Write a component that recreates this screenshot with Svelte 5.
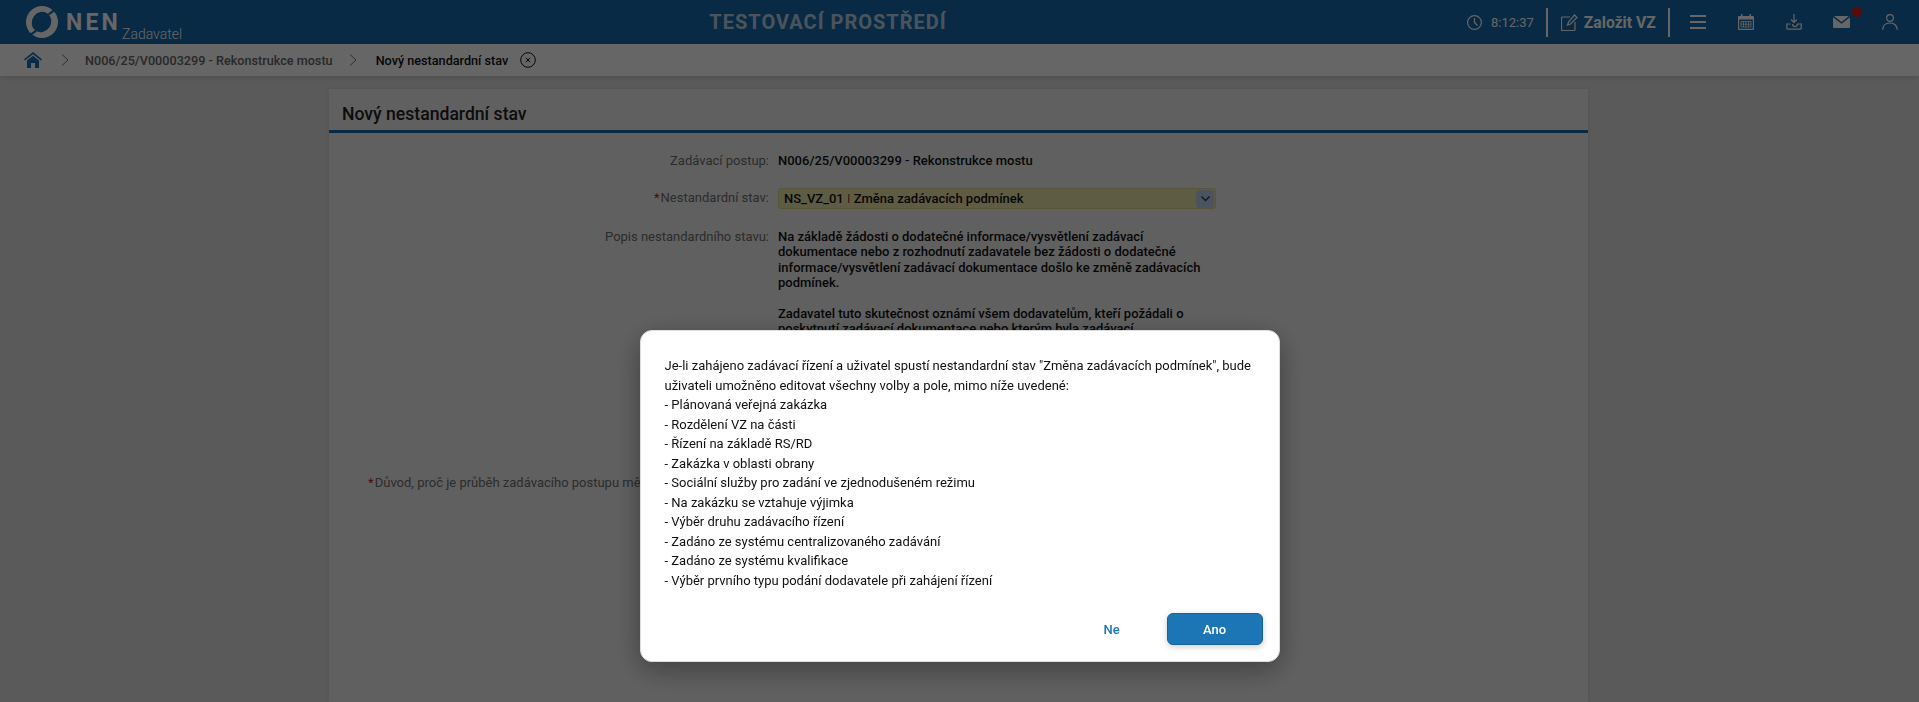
<script>
  const rows = [
    'Je-li zahájeno zadávací řízení a uživatel spustí nestandardní stav "Změna zadávacích podmínek", bude uživateli umožněno editovat všechny volby a pole, mimo níže uvedené:',
    '- Plánovaná veřejná zakázka',
    '- Rozdělení VZ na části',
    '- Řízení na základě RS/RD',
    '- Zakázka v oblasti obrany',
    '- Sociální služby pro zadání ve zjednodušeném režimu',
    '- Na zakázku se vztahuje výjimka',
    '- Výběr druhu zadávacího řízení',
    '- Zadáno ze systému centralizovaného zadávání',
    '- Zadáno ze systému kvalifikace',
    '- Výběr prvního typu podání dodavatele při zahájení řízení'
  ];
</script>

<div class="page">
  <header class="top">
    <div class="brand">
      <svg class="logo" viewBox="0 0 32 32" width="32" height="32">
        <circle cx="16" cy="16" r="16" fill="#fff"/>
        <ellipse cx="15.500" cy="16" rx="9.500" ry="10.500" transform="rotate(35 15.500 16)" fill="#146aac"/>
        <path d="M32 2.500C28 4 25.500 6 22.500 8.500M0 29.500C4 29 7.500 27.500 10 24.500" fill="none" stroke="#146aac" stroke-width="2.200"/>
      </svg>
      <span class="nen">NEN</span>
      <span class="role">Zadavatel</span>
    </div>
    <div class="env">TESTOVACÍ PROSTŘEDÍ</div>
    <div class="tools">
      <svg class="clock" viewBox="0 0 15 15" width="15" height="15" fill="none" stroke="#fff" stroke-width="1.200"><circle cx="7.500" cy="7.500" r="6.900"/><path d="M7.500 3v4.500l3 3"/></svg>
      <span class="time">8:12:37</span>
      <span class="sep"></span>
      <svg class="edit" viewBox="0 0 17 17" width="17" height="17" fill="none" stroke="#fff" stroke-width="1.200"><path d="M9 3H1.500a1 1 0 0 0-1 1v11.500a1 1 0 0 0 1 1H13a1 1 0 0 0 1-1V8M6.500 11l1-3L13.500 1l2.500 2.500L9.500 10z"/></svg>
      <span class="create">Založit VZ</span>
      <span class="sep last"></span>
      <svg class="ic" viewBox="0 0 16 14" width="16" height="14" fill="none" stroke="#fff" stroke-width="1.800"><path d="M0 1h16M0 7h16M0 13h16"/></svg>
      <svg class="ic" viewBox="0 0 16 16" width="16" height="16"><path d="M3 0h1.500v2h7V0H13v2h2a1 1 0 0 1 1 1v12a1 1 0 0 1-1 1H1a1 1 0 0 1-1-1V3a1 1 0 0 1 1-1h2zM1.200 5.500v9.300h13.600V5.500z" fill="#fff" fill-rule="evenodd"/><path d="M3 7.500h10v5.500H3zM5.500 7.500V13M8 7.500V13M10.500 7.500V13M3 10.200h10" stroke="#fff" stroke-width=".8" fill="none"/></svg>
      <svg class="ic" viewBox="0 0 16 16" width="16" height="16" fill="none" stroke="#fff" stroke-width="1.200"><path d="M8 0v8M5 5.500 8 8.500l3-3M4.500 10H.8v4.200a1 1 0 0 0 1 1h12.400a1 1 0 0 0 1-1V10h-3.700a2.500 2.500 0 0 1-5 0"/></svg>
      <span class="mail">
        <svg viewBox="0 0 17 12" width="17" height="12"><path d="M1 0h15l-7.500 6zM0 1.200l8.500 6.600 8.500-6.600V11a1 1 0 0 1-1 1H1a1 1 0 0 1-1-1z" fill="#fff"/></svg>
        <i class="dot"></i>
      </span>
      <svg class="ic" viewBox="0 0 16 16" width="16" height="16" fill="none" stroke="#fff" stroke-width="1.200"><circle cx="8" cy="4" r="3.400"/><path d="M.8 16c0-4 2.500-7 7.200-7s7.200 3 7.200 7"/></svg>
    </div>
  </header>

  <nav class="crumbs">
    <svg class="home" viewBox="0 0 18 16" width="18" height="16"><path d="M9 0l9 7.300-1 1.200L9 2.200 1 8.500 0 7.300z" fill="#1a6fae"/><path d="M9 3.700l6 4.800V16h-4v-5H7v5H3V8.500z" fill="#1a6fae"/></svg>
    <svg class="chev" viewBox="0 0 8 12" width="8" height="12" fill="none" stroke="#777" stroke-width="1"><path d="M1 .5 7 6 1 11.500"/></svg>
    <span class="crumb">N006/25/V00003299 - Rekonstrukce mostu</span>
    <svg class="chev" viewBox="0 0 8 12" width="8" height="12" fill="none" stroke="#777" stroke-width="1"><path d="M1 .5 7 6 1 11.500"/></svg>
    <span class="crumb cur">Nový nestandardní stav</span>
    <svg class="close" viewBox="0 0 16 16" width="16" height="16" fill="none" stroke="#111" stroke-width="1"><circle cx="8" cy="8" r="7.300"/><path d="M5.800 5.800l4.400 4.400M10.200 5.800l-4.400 4.400"/></svg>
  </nav>

  <main class="card">
    <h1 class="title">Nový nestandardní stav</h1>
    <div class="form">
      <div class="lab">Zadávací postup:</div>
      <div class="val">N006/25/V00003299 - Rekonstrukce mostu</div>

      <div class="lab sel"><b>*</b>Nestandardní stav:</div>
      <div class="select"><span>NS_VZ_01 <em>I</em> Změna zadávacích podmínek</span><span class="arrow"><svg viewBox="0 0 9 6" width="9" height="6" fill="none" stroke="#123f66" stroke-width="1.300"><path d="M.5.500 4.500 4.500 8.500.5"/></svg></span></div>

      <div class="lab popis">Popis nestandardního stavu:</div>
      <div class="val desc">Na základě žádosti o dodatečné informace/vysvětlení zadávací dokumentace nebo z rozhodnutí zadavatele bez žádosti o dodatečné informace/vysvětlení zadávací dokumentace došlo ke změně zadávacích podmínek.<br /><br />Zadavatel tuto skutečnost oznámí všem dodavatelům, kteří požádali o poskytnutí zadávací dokumentace nebo kterým byla zadávací</div>

      <div class="lab reason"><b>*</b>Důvod, proč je průběh zadávacího postupu měněn:</div>
      <div></div>
    </div>
  </main>

  <div class="veil">
    <div class="dialog">
      <div class="msg">
        {#each rows as r}<div>{r}</div>{/each}
      </div>
      <div class="actions">
        <button class="ne">Ne</button>
        <button class="ano">Ano</button>
      </div>
    </div>
  </div>
</div>

<style>
  :global(html), :global(body) { margin: 0; height: 100%; overflow: hidden; }
  .page { height: 702px; background: #e2e2e2; font-family: Roboto, "Liberation Sans", sans-serif; font-size: 13px; display: flex; flex-direction: column; overflow: hidden; }
  .top { height: 44px; flex: none; background: #146aac; display: flex; align-items: center; color: #fff; }
  .brand { width: 690px; flex: none; display: flex; align-items: center; padding-left: 26px; box-sizing: border-box; height: 100%; }
  .logo { flex: none; }
  .nen { font-size: 23px; font-weight: 700; letter-spacing: 3.2px; margin-left: 8px; margin-top: 1px; }
  .role { font-size: 14px; font-weight: 300; margin-left: 1px; align-self: flex-end; margin-bottom: 2px; }
  .env { width: 276px; flex: none; text-align: center; font-size: 20px; font-weight: 700; letter-spacing: 1px; opacity: .7; }
  .tools { flex: 1; display: flex; align-items: center; padding-left: 501px; white-space: nowrap; }
  .clock, .edit { flex: none; }
  .time { font-size: 13px; margin-left: 9px; }
  .sep { width: 2px; height: 29px; background: #fff; margin: 0 13px 0 12px; flex: none; }
  .sep.last { margin: 0 20px 0 12px; }
  .create { font-size: 15.7px; font-weight: 700; margin-left: 6px; }
  .ic { margin-right: 32px; flex: none; }
  .mail { position: relative; display: flex; margin-right: 32px; margin-left: -1px; }
  .dot { position: absolute; left: 19px; top: -9px; width: 10px; height: 10px; border-radius: 50%; background: #e01a1a; }
  .crumbs { height: 32px; flex: none; background: #fff; display: flex; align-items: center; padding-left: 24px; box-shadow: 0 2px 5px rgba(0,0,0,.12); position: relative; }
  .home { margin-right: 19px; }
  .crumb { font-weight: 500; font-size: 12.65px; color: #666; margin: 0 16px; white-space: nowrap; }
  .crumb.cur { color: #111; margin: 0 12px 0 19px; }
  .card { margin: 13px 0 0 329px; width: 1259px; flex: 1; background: #f1f1f1; box-shadow: 0 0 5px rgba(0,0,0,.1); }
  .title { margin: 0; height: 33px; padding: 8px 0 0 13px; line-height: 34px; font-size: 17.6px; font-weight: 500; color: #222; border-bottom: 3px solid #146aac; }
  .form { display: grid; grid-template-columns: 440px 438px; column-gap: 9px; padding-top: 20px; align-items: start; }
  .lab { text-align: right; color: #6e6e6e; line-height: 16px; white-space: nowrap; }
  .lab b { color: #c01818; font-weight: 400; margin-right: 1px; }
  .lab.sel { margin-top: 21px; }
  .lab.popis { margin-top: 20px; }
  .lab.reason { padding-right: 104px; }
  .val { color: #111; font-weight: 500; line-height: 16px; }
  .select { margin-top: 19px; height: 21px; box-sizing: border-box; background: #ece5a8; border: 1px solid #ddd58d; border-radius: 3px; display: flex; justify-content: space-between; align-items: center; padding: 0 1px 0 5px; color: #111; font-weight: 500; }
  .select em { font-style: normal; font-weight: 300; }
  .arrow { width: 18px; height: 18px; background: #bcd0e6; border-radius: 4px; display: flex; align-items: center; justify-content: center; }
  .desc { height: 246px; line-height: 15.4px; margin-top: 20px; overflow: hidden; }
  .veil { position: fixed; inset: 0; background: rgba(0,0,0,.6); display: flex; justify-content: center; align-items: flex-start; padding-top: 330px; box-sizing: border-box; }
  .dialog { width: 640px; height: 332px; box-sizing: border-box; background: #fff; border-radius: 12px; border: 1px solid #ddd; padding: 25px 16px 0 24px; display: flex; flex-direction: column; box-shadow: 0 8px 30px rgba(0,0,0,.35); color: #111; }
  .msg { line-height: 19.5px; font-size: 13px; }
  .actions { margin-top: auto; margin-bottom: 16px; display: flex; justify-content: flex-end; align-items: center; }
  button { font: 500 13px Roboto, sans-serif; cursor: pointer; }
  .ne { background: none; border: 0; color: #1c75b5; width: 96px; height: 32px; margin-right: 7px; }
  .ano { background: #1c75b5; color: #fff; border: 1px solid #16629a; border-radius: 6px; width: 96px; height: 32px; box-shadow: 0 2px 6px rgba(0,0,0,.2); }
</style>
